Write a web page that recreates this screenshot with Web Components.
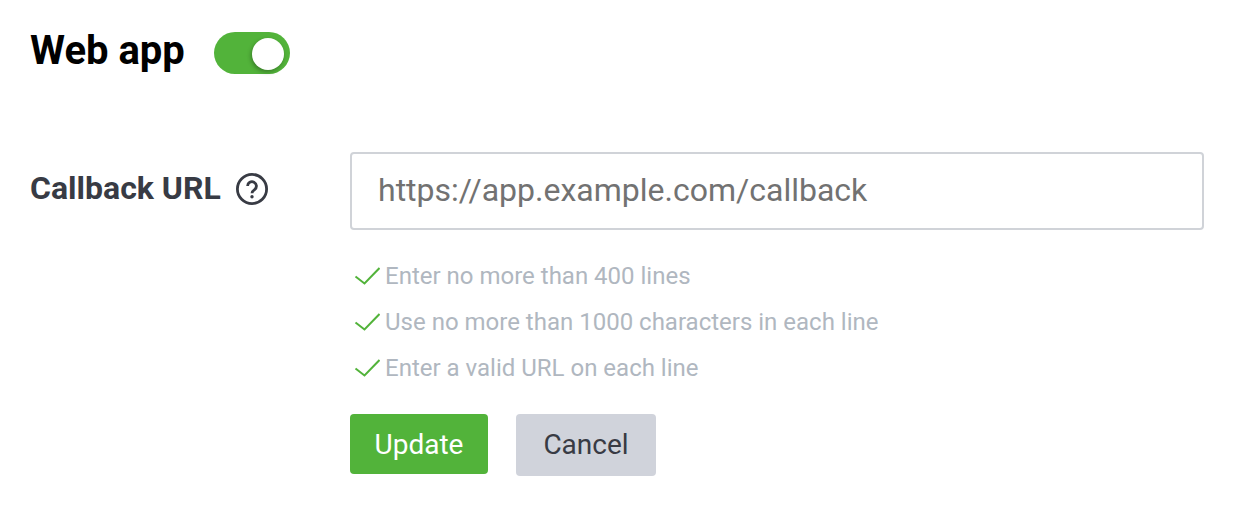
<!DOCTYPE html>
<html><head><meta charset="utf-8"><style>
html,body{margin:0;padding:0;background:#fff}
body{font-family:Roboto,"Liberation Sans",sans-serif;width:1234px;height:530px;overflow:hidden}
</style></head><body>
<app-page></app-page>
<script>
class AppToggle extends HTMLElement{constructor(){super();this.attachShadow({mode:'open'}).innerHTML=`<style>
:host{display:inline-flex;justify-content:flex-end;align-items:flex-start;box-sizing:border-box;width:76px;height:42px;border-radius:21px;background:#52b33a;padding:6px 6px 0 0}
i{display:block;width:32px;height:32px;border-radius:50%;background:#fff;box-shadow:-1px 2px 4px rgba(0,0,0,.3)}
</style><i></i>`}}
customElements.define('app-toggle',AppToggle);
class AppHelp extends HTMLElement{constructor(){super();this.attachShadow({mode:'open'}).innerHTML=`<style>
:host{display:inline-flex;width:34px;height:34px}svg{display:block}
</style><svg width="34" height="34" viewBox="0 0 34 34"><circle cx="17" cy="17" r="14.6" fill="none" stroke="#383b44" stroke-width="2.8"/><path d="M12.600 14a4.400 4.400 0 1 1 7 3.600c-1.700 1.200-2.600 1.900-2.600 3.600" fill="none" stroke="#383b44" stroke-width="2.800"/><circle cx="17" cy="24.800" r="1.700" fill="#383b44"/></svg>`}}
customElements.define('app-help',AppHelp);
class AppRule extends HTMLElement{constructor(){super();this.attachShadow({mode:'open'}).innerHTML=`<style>
:host{display:flex;align-items:center;gap:5px;height:46px;font-size:24px;color:#b0b7c0}
svg{display:block;flex:none;margin-top:-1px}
</style><svg width="26" height="18" viewBox="0 0 26 18"><path d="M1.500 9.500l9 7L25.500 1" fill="none" stroke="#52b33a" stroke-width="2"/></svg><slot></slot>`}}
customElements.define('app-rule',AppRule);
class AppButton extends HTMLElement{constructor(){super();this.attachShadow({mode:'open'}).innerHTML=`<style>
:host{display:inline-flex;align-items:center;justify-content:center;border-radius:4px;font-size:28px;box-sizing:border-box}
:host([primary]){width:138px;height:60px;background:#52b33a;color:#fff}
:host(:not([primary])){width:140px;height:62px;padding-bottom:2px;background:#d0d3db;color:#383b44}
</style><slot></slot>`}}
customElements.define('app-button',AppButton);
class AppPage extends HTMLElement{constructor(){super();this.attachShadow({mode:'open'}).innerHTML=`<style>
:host{display:block;padding:32px 30px 0}
header{display:flex;align-items:center;gap:29px;height:42px}
h1{margin:0;font:700 40px/42px Roboto,sans-serif;color:#000;margin-top:-4px}
.row{display:flex;margin-top:78px}
.label{width:320px;display:flex;gap:14px;height:72px;align-items:center}
.label span{font:700 32px Roboto,sans-serif;color:#383b44}
.label app-help{margin-top:1px}
.main{width:854px}
.input{box-sizing:border-box;height:78px;border:2px solid #d0d3d8;border-radius:4px;display:flex;align-items:center;padding:0 26px 3px;font-size:32px;color:#727272}
.rules{margin-top:23px;padding-left:4px}
.btns{display:flex;align-items:flex-start;gap:28px;margin-top:23px}
</style><header><h1>Web app</h1><app-toggle></app-toggle></header>
<div class="row"><div class="label"><span>Callback URL</span><app-help></app-help></div>
<div class="main"><div class="input">https://app.example.com/callback</div>
<div class="rules"><app-rule>Enter no more than 400 lines</app-rule><app-rule>Use no more than 1000 characters in each line</app-rule><app-rule>Enter a valid URL on each line</app-rule></div>
<div class="btns"><app-button primary>Update</app-button><app-button>Cancel</app-button></div></div></div>`}}
customElements.define('app-page',AppPage);
</script></body></html>
